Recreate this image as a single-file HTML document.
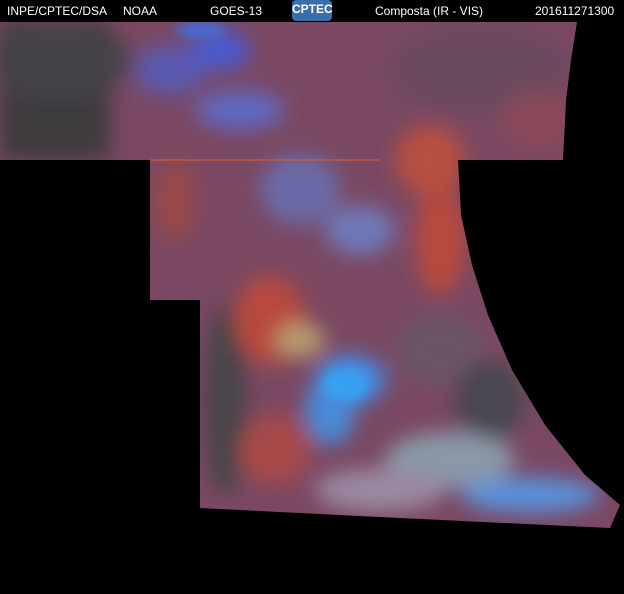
<!DOCTYPE html>
<html><head><style>
html,body{margin:0;padding:0;background:#000;width:624px;height:594px;overflow:hidden}
.t{position:absolute;top:4px;color:#fff;font:12px "Liberation Sans",sans-serif;letter-spacing:0}
</style></head><body>
<svg width="624" height="594" style="position:absolute;left:0;top:0">
<defs>
<clipPath id="c"><path d="M0,22 L577,22 L571,60 L566,100 L563,160 L458,160 L461,215 L472,265 L488,315 L512,370 L545,425 L585,475 L620,505 L610,528 L400,518 L200,508 L200,300 L150,300 L150,160 L0,160 Z"/></clipPath>
<filter id="b"><feGaussianBlur stdDeviation="10"/></filter>
<filter id="b2"><feGaussianBlur stdDeviation="5"/></filter>
</defs>
<g clip-path="url(#c)">
<rect x="0" y="0" width="624" height="594" fill="#7a4862"/>
<g filter="url(#b)">
<rect x="0" y="20" width="110" height="140" fill="#3c3a3e"/>
<ellipse cx="60" cy="60" rx="70" ry="40" fill="#454246"/>
<ellipse cx="480" cy="70" rx="90" ry="45" fill="#6a4a5e"/>
<ellipse cx="540" cy="120" rx="40" ry="30" fill="#8a4a5a"/>
<ellipse cx="170" cy="70" rx="35" ry="25" fill="#5a5ab0"/>
<ellipse cx="220" cy="50" rx="30" ry="20" fill="#4a5ad0"/>
<ellipse cx="240" cy="110" rx="45" ry="20" fill="#6068c0"/>
<ellipse cx="300" cy="190" rx="40" ry="35" fill="#6a6aa8"/>
<ellipse cx="360" cy="230" rx="35" ry="25" fill="#7078b8"/>
<ellipse cx="430" cy="160" rx="35" ry="35" fill="#b85040"/>
<ellipse cx="440" cy="240" rx="25" ry="55" fill="#b84a3e"/>
<ellipse cx="175" cy="200" rx="20" ry="40" fill="#9a4a4a"/>
<ellipse cx="225" cy="400" rx="22" ry="95" fill="#4a4448"/>
<ellipse cx="270" cy="320" rx="35" ry="45" fill="#b84a3e"/>
<ellipse cx="275" cy="450" rx="35" ry="35" fill="#a84a48"/>
<ellipse cx="350" cy="380" rx="35" ry="25" fill="#3f8ee8"/>
<ellipse cx="330" cy="410" rx="25" ry="35" fill="#4a8ad8"/>
<ellipse cx="440" cy="350" rx="45" ry="35" fill="#6a5466"/>
<ellipse cx="490" cy="400" rx="35" ry="40" fill="#4a4650"/>
<ellipse cx="450" cy="460" rx="65" ry="28" fill="#8a98a8"/>
<ellipse cx="530" cy="495" rx="70" ry="18" fill="#5a90d8"/>
<ellipse cx="380" cy="490" rx="65" ry="22" fill="#9a88a0"/>
<ellipse cx="300" cy="340" rx="25" ry="18" fill="#b89a70"/>
</g>
<g filter="url(#b2)">
<ellipse cx="345" cy="385" rx="22" ry="16" fill="#38a0f0"/>
<ellipse cx="200" cy="30" rx="25" ry="8" fill="#4a6ad8"/>
</g>
</g>
<line x1="150" y1="160" x2="380" y2="160" stroke="#e06030" stroke-width="1"/>
</svg>
<div class="t" style="left:7px">INPE/CPTEC/DSA</div>
<div class="t" style="left:123px">NOAA</div>
<div class="t" style="left:210px">GOES-13</div>
<div style="position:absolute;left:292px;top:0;width:40px;height:21px;background:#3a6ea8;color:#fff;font:bold 12px 'Liberation Sans',sans-serif;text-align:center;line-height:18px;border-radius:4px">CPTEC</div>
<div class="t" style="left:375px">Composta (IR - VIS)</div>
<div class="t" style="left:535px">201611271300</div>
</body></html>
